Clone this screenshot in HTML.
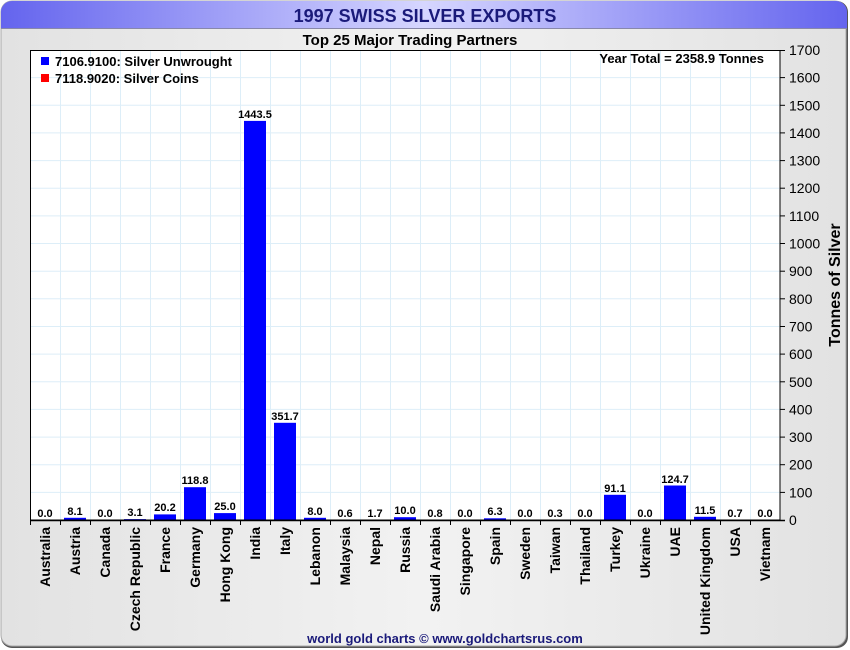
<!DOCTYPE html>
<html><head><meta charset="utf-8"><style>
html,body{margin:0;padding:0;width:850px;height:650px;background:#fff;overflow:hidden}
svg{display:block;font-family:"Liberation Sans",Arial,sans-serif}
</style></head><body>
<svg width="850" height="650" viewBox="0 0 850 650">
<defs>
<linearGradient id="tb" x1="0" x2="1" y1="0" y2="0">
<stop offset="0" stop-color="#6464ee"/><stop offset="0.5" stop-color="#d6d6ff"/><stop offset="1" stop-color="#6464ee"/>
</linearGradient>
<linearGradient id="bg" x1="0" x2="1" y1="0" y2="0">
<stop offset="0" stop-color="#e2e2e2"/><stop offset="0.5" stop-color="#f2f2f2"/><stop offset="1" stop-color="#e2e2e2"/>
</linearGradient>
</defs>
<rect x="1" y="1" width="847" height="647" rx="11" fill="#555"/>
<rect x="1" y="1" width="845" height="645" rx="11" fill="url(#bg)" stroke="#aaa" stroke-width="1"/>
<path d="M1 28 V12 A11 11 0 0 1 12 1 H836 A11 11 0 0 1 847 12 V28 Z" fill="url(#tb)"/>
<line x1="1" y1="28.5" x2="847" y2="28.5" stroke="#8888aa"/>
<text x="425" y="22" text-anchor="middle" font-size="18" font-weight="bold" fill="#1a1a7a">1997 SWISS SILVER EXPORTS</text>
<text x="410" y="45" text-anchor="middle" font-size="15" font-weight="bold" fill="#000">Top 25 Major Trading Partners</text>
<rect x="30" y="50" width="750" height="470" fill="#fff"/>
<g stroke="#ddeef8" stroke-width="1">
<line x1="30" x2="780" y1="492.4" y2="492.4"/><line x1="30" x2="780" y1="464.7" y2="464.7"/><line x1="30" x2="780" y1="437.1" y2="437.1"/><line x1="30" x2="780" y1="409.4" y2="409.4"/><line x1="30" x2="780" y1="381.8" y2="381.8"/><line x1="30" x2="780" y1="354.1" y2="354.1"/><line x1="30" x2="780" y1="326.5" y2="326.5"/><line x1="30" x2="780" y1="298.8" y2="298.8"/><line x1="30" x2="780" y1="271.2" y2="271.2"/><line x1="30" x2="780" y1="243.5" y2="243.5"/><line x1="30" x2="780" y1="215.9" y2="215.9"/><line x1="30" x2="780" y1="188.2" y2="188.2"/><line x1="30" x2="780" y1="160.6" y2="160.6"/><line x1="30" x2="780" y1="132.9" y2="132.9"/><line x1="30" x2="780" y1="105.3" y2="105.3"/><line x1="30" x2="780" y1="77.6" y2="77.6"/>
<line x1="60.5" x2="60.5" y1="50" y2="520"/><line x1="90.5" x2="90.5" y1="50" y2="520"/><line x1="120.5" x2="120.5" y1="50" y2="520"/><line x1="150.5" x2="150.5" y1="50" y2="520"/><line x1="180.5" x2="180.5" y1="50" y2="520"/><line x1="210.5" x2="210.5" y1="50" y2="520"/><line x1="240.5" x2="240.5" y1="50" y2="520"/><line x1="270.5" x2="270.5" y1="50" y2="520"/><line x1="300.5" x2="300.5" y1="50" y2="520"/><line x1="330.5" x2="330.5" y1="50" y2="520"/><line x1="360.5" x2="360.5" y1="50" y2="520"/><line x1="390.5" x2="390.5" y1="50" y2="520"/><line x1="420.5" x2="420.5" y1="50" y2="520"/><line x1="450.5" x2="450.5" y1="50" y2="520"/><line x1="480.5" x2="480.5" y1="50" y2="520"/><line x1="510.5" x2="510.5" y1="50" y2="520"/><line x1="540.5" x2="540.5" y1="50" y2="520"/><line x1="570.5" x2="570.5" y1="50" y2="520"/><line x1="600.5" x2="600.5" y1="50" y2="520"/><line x1="630.5" x2="630.5" y1="50" y2="520"/><line x1="660.5" x2="660.5" y1="50" y2="520"/><line x1="690.5" x2="690.5" y1="50" y2="520"/><line x1="720.5" x2="720.5" y1="50" y2="520"/><line x1="750.5" x2="750.5" y1="50" y2="520"/>
</g>
<g fill="#0000ff">
<rect x="64" y="517.8" width="22" height="2.2"/>
<rect x="124" y="519.1" width="22" height="0.9"/>
<rect x="154" y="514.4" width="22" height="5.6"/>
<rect x="184" y="487.2" width="22" height="32.8"/>
<rect x="214" y="513.1" width="22" height="6.9"/>
<rect x="244" y="120.9" width="22" height="399.1"/>
<rect x="274" y="422.8" width="22" height="97.2"/>
<rect x="304" y="517.8" width="22" height="2.2"/>
<rect x="334" y="519.8" width="22" height="0.2"/>
<rect x="364" y="519.5" width="22" height="0.5"/>
<rect x="394" y="517.2" width="22" height="2.8"/>
<rect x="424" y="519.8" width="22" height="0.2"/>
<rect x="484" y="518.3" width="22" height="1.7"/>
<rect x="604" y="494.8" width="22" height="25.2"/>
<rect x="664" y="485.5" width="22" height="34.5"/>
<rect x="694" y="516.8" width="22" height="3.2"/>
</g>
<g font-size="11" font-weight="bold" text-anchor="middle" fill="#000">
<text x="45" y="517">0.0</text><text x="75" y="515">8.1</text><text x="105" y="517">0.0</text><text x="135" y="516">3.1</text><text x="165" y="511">20.2</text><text x="195" y="484">118.8</text><text x="225" y="510">25.0</text><text x="255" y="118">1443.5</text><text x="285" y="420">351.7</text><text x="315" y="515">8.0</text><text x="345" y="517">0.6</text><text x="375" y="517">1.7</text><text x="405" y="514">10.0</text><text x="435" y="517">0.8</text><text x="465" y="517">0.0</text><text x="495" y="515">6.3</text><text x="525" y="517">0.0</text><text x="555" y="517">0.3</text><text x="585" y="517">0.0</text><text x="615" y="492">91.1</text><text x="645" y="517">0.0</text><text x="675" y="483">124.7</text><text x="705" y="514">11.5</text><text x="735" y="517">0.7</text><text x="765" y="517">0.0</text>
</g>
<rect x="30.5" y="50.5" width="749.5" height="469.5" fill="none" stroke="#000" stroke-width="1"/>
<line x1="30" y1="520.5" x2="785" y2="520.5" stroke="#000" stroke-width="1.5"/>
<g stroke="#000">
<line x1="30.5" x2="30.5" y1="520" y2="525"/><line x1="60.5" x2="60.5" y1="520" y2="525"/><line x1="90.5" x2="90.5" y1="520" y2="525"/><line x1="120.5" x2="120.5" y1="520" y2="525"/><line x1="150.5" x2="150.5" y1="520" y2="525"/><line x1="180.5" x2="180.5" y1="520" y2="525"/><line x1="210.5" x2="210.5" y1="520" y2="525"/><line x1="240.5" x2="240.5" y1="520" y2="525"/><line x1="270.5" x2="270.5" y1="520" y2="525"/><line x1="300.5" x2="300.5" y1="520" y2="525"/><line x1="330.5" x2="330.5" y1="520" y2="525"/><line x1="360.5" x2="360.5" y1="520" y2="525"/><line x1="390.5" x2="390.5" y1="520" y2="525"/><line x1="420.5" x2="420.5" y1="520" y2="525"/><line x1="450.5" x2="450.5" y1="520" y2="525"/><line x1="480.5" x2="480.5" y1="520" y2="525"/><line x1="510.5" x2="510.5" y1="520" y2="525"/><line x1="540.5" x2="540.5" y1="520" y2="525"/><line x1="570.5" x2="570.5" y1="520" y2="525"/><line x1="600.5" x2="600.5" y1="520" y2="525"/><line x1="630.5" x2="630.5" y1="520" y2="525"/><line x1="660.5" x2="660.5" y1="520" y2="525"/><line x1="690.5" x2="690.5" y1="520" y2="525"/><line x1="720.5" x2="720.5" y1="520" y2="525"/><line x1="750.5" x2="750.5" y1="520" y2="525"/>
<line x1="780" x2="785" y1="492.4" y2="492.4"/><line x1="780" x2="785" y1="464.7" y2="464.7"/><line x1="780" x2="785" y1="437.1" y2="437.1"/><line x1="780" x2="785" y1="409.4" y2="409.4"/><line x1="780" x2="785" y1="381.8" y2="381.8"/><line x1="780" x2="785" y1="354.1" y2="354.1"/><line x1="780" x2="785" y1="326.5" y2="326.5"/><line x1="780" x2="785" y1="298.8" y2="298.8"/><line x1="780" x2="785" y1="271.2" y2="271.2"/><line x1="780" x2="785" y1="243.5" y2="243.5"/><line x1="780" x2="785" y1="215.9" y2="215.9"/><line x1="780" x2="785" y1="188.2" y2="188.2"/><line x1="780" x2="785" y1="160.6" y2="160.6"/><line x1="780" x2="785" y1="132.9" y2="132.9"/><line x1="780" x2="785" y1="105.3" y2="105.3"/><line x1="780" x2="785" y1="77.6" y2="77.6"/><line x1="780" x2="785" y1="50.5" y2="50.5"/>
</g>
<g font-size="14" fill="#000">
<text x="789" y="525">0</text><text x="789" y="497.4">100</text><text x="789" y="469.7">200</text><text x="789" y="442.1">300</text><text x="789" y="414.4">400</text><text x="789" y="386.8">500</text><text x="789" y="359.1">600</text><text x="789" y="331.5">700</text><text x="789" y="303.8">800</text><text x="789" y="276.2">900</text><text x="789" y="248.5">1000</text><text x="789" y="220.9">1100</text><text x="789" y="193.2">1200</text><text x="789" y="165.6">1300</text><text x="789" y="137.9">1400</text><text x="789" y="110.3">1500</text><text x="789" y="82.6">1600</text><text x="789" y="55">1700</text>
</g>
<text transform="translate(840,285) rotate(-90)" text-anchor="middle" font-size="16" font-weight="bold">Tonnes of Silver</text>
<g font-size="14" font-weight="bold" text-anchor="end">
<text transform="translate(50,527) rotate(-90)">Australia</text>
<text transform="translate(80,527) rotate(-90)">Austria</text>
<text transform="translate(110,527) rotate(-90)">Canada</text>
<text transform="translate(140,527) rotate(-90)">Czech Republic</text>
<text transform="translate(170,527) rotate(-90)">France</text>
<text transform="translate(200,527) rotate(-90)">Germany</text>
<text transform="translate(230,527) rotate(-90)">Hong Kong</text>
<text transform="translate(260,527) rotate(-90)">India</text>
<text transform="translate(290,527) rotate(-90)">Italy</text>
<text transform="translate(320,527) rotate(-90)">Lebanon</text>
<text transform="translate(350,527) rotate(-90)">Malaysia</text>
<text transform="translate(380,527) rotate(-90)">Nepal</text>
<text transform="translate(410,527) rotate(-90)">Russia</text>
<text transform="translate(440,527) rotate(-90)">Saudi Arabia</text>
<text transform="translate(470,527) rotate(-90)">Singapore</text>
<text transform="translate(500,527) rotate(-90)">Spain</text>
<text transform="translate(530,527) rotate(-90)">Sweden</text>
<text transform="translate(560,527) rotate(-90)">Taiwan</text>
<text transform="translate(590,527) rotate(-90)">Thailand</text>
<text transform="translate(620,527) rotate(-90)">Turkey</text>
<text transform="translate(650,527) rotate(-90)">Ukraine</text>
<text transform="translate(680,527) rotate(-90)">UAE</text>
<text transform="translate(710,527) rotate(-90)">United Kingdom</text>
<text transform="translate(740,527) rotate(-90)">USA</text>
<text transform="translate(770,527) rotate(-90)">Vietnam</text>
</g>
<rect x="41" y="57" width="8" height="8" fill="#0000ff"/>
<rect x="41" y="74" width="8" height="8" fill="#ff0000"/>
<g font-size="13" font-weight="bold">
<text x="55" y="66">7106.9100: Silver Unwrought</text>
<text x="55" y="83">7118.9020: Silver Coins</text>
<text x="764" y="63" text-anchor="end">Year Total = 2358.9 Tonnes</text>
</g>
<text x="445" y="643" text-anchor="middle" font-size="13" font-weight="bold" fill="#1a1a7a">world gold charts © www.goldchartsrus.com</text>
</svg>
</body></html>
